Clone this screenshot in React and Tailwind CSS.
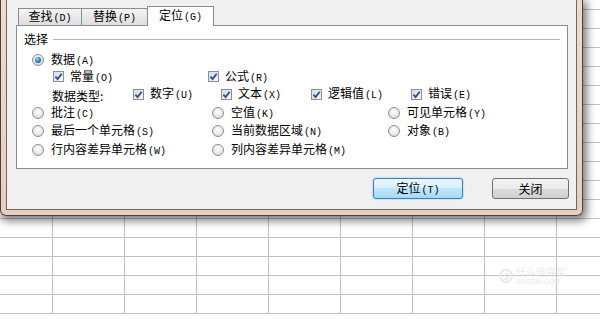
import React from 'react'

const ROWS = Array.from({ length: 17 })
const COLS = Array.from({ length: 8 })

function Key({ k }) {
  return <span className="ml-px font-['Liberation_Mono',monospace] text-[10px]">({k})</span>
}

function Label({ text, k }) {
  return (
    <span className="whitespace-nowrap text-[12px] leading-none text-black">
      {text}
      {k && <Key k={k} />}
    </span>
  )
}

function Radio({ checked }) {
  return (
    <span className="flex h-[12px] w-[12px] shrink-0 items-center justify-center rounded-full border border-[#8e9194] bg-[radial-gradient(circle_at_50%_40%,#ffffff_0%,#e8e8e8_55%,#c8c8c8_100%)]">
      {checked && (
        <span className="h-[6px] w-[6px] rounded-full bg-[radial-gradient(circle_at_40%_35%,#9ee6ff_0%,#2c88c4_45%,#123c63_100%)]" />
      )}
    </span>
  )
}

function Check() {
  return (
    <span className="flex h-[11px] w-[11px] shrink-0 items-center justify-center border border-[#8f8f8f] bg-[linear-gradient(135deg,#d3dbe5,#f6f8fa)]">
      <svg viewBox="0 0 9 9" className="h-[9px] w-[9px]">
        <path d="M1.4 4.6 L3.6 7 L7.7 1.7" fill="none" stroke="#2b4c8c" strokeWidth="1.8" />
      </svg>
    </span>
  )
}

function RadioItem({ text, k, checked, w }) {
  return (
    <div className={`flex items-center gap-[7px] ${w || ''}`}>
      <Radio checked={checked} />
      <Label text={text} k={k} />
    </div>
  )
}

function CheckItem({ text, k, w }) {
  return (
    <div className={`flex items-center gap-[6px] ${w || ''}`}>
      <Check />
      <Label text={text} k={k} />
    </div>
  )
}

export default function App() {
  return (
    <div className="relative h-[319px] w-[600px] overflow-hidden bg-white font-['Noto_Sans_CJK_SC','Noto_Sans',sans-serif]">
      {/* spreadsheet behind the dialog */}
      <div className="flex flex-col">
        {ROWS.map((_, r) => (
          <div key={r} className={`flex shrink-0 border-b border-[#c2c2c2] ${r === 0 ? 'h-[10px]' : 'h-[19px]'}`}>
            <div className="h-full w-[53px] shrink-0 border-r border-[#c2c2c2]" />
            {COLS.map((_, c) => (
              <div key={c} className="h-full w-[72px] shrink-0 border-r border-[#c2c2c2]" />
            ))}
          </div>
        ))}
      </div>

      {/* watermark */}
      <div className="absolute left-[499px] top-[266px] flex items-center gap-[3px] text-[#e9e9e9]">
        <span className="flex h-[14px] w-[14px] items-center justify-center rounded-full border-2 border-[#e9e9e9] text-[9px] font-bold leading-none">S</span>
        <div className="flex flex-col gap-px">
          <span className="block h-[11px] text-[10px] leading-[11px]">什么值得买</span>
          <span className="block h-[8px] font-['Liberation_Sans',sans-serif] text-[7px] leading-[8px]">SMZDM.COM</span>
        </div>
      </div>

      {/* dialog */}
      <div className="absolute left-0 top-0 h-[216px] w-[583px] rounded-b-[6px] border-x border-b border-[#4f4139] bg-[linear-gradient(to_bottom,#ecdccd,#e6cfbc)] px-[5px] pb-[5px] shadow-[2px_3px_8px_2px_rgba(0,0,0,0.5)]">
        <div className="flex h-full flex-col border-x border-b border-[#76655a] bg-[#f0f0f0]">
          {/* tabs */}
          <div className="flex items-end pl-[11px] pt-[6px]">
            <div className="flex h-[17px] w-[64px] items-center justify-center border-x border-t border-[#898c95] bg-[linear-gradient(to_bottom,#f4f4f4,#dedede)]">
              <Label text="查找" k="D" />
            </div>
            <div className="flex h-[17px] w-[66px] items-center justify-center border-r border-t border-[#898c95] bg-[linear-gradient(to_bottom,#f4f4f4,#dedede)]">
              <Label text="替换" k="P" />
            </div>
            <div className="relative z-10 -mb-px -ml-px flex h-[20px] w-[67px] items-center justify-center border-x border-t border-[#898c95] bg-white pb-[2px]">
              <Label text="定位" k="G" />
            </div>
          </div>

          {/* tab panel */}
          <div className="ml-[9px] mr-[8px] h-[144px] border border-[#898c95] bg-white">
            <div className="mt-[5px] flex h-[16px] items-center px-[7px]">
              <Label text="选择" />
              <div className="ml-[5px] h-px flex-1 bg-[#b4b4b4]" />
            </div>

            <div className="mt-[5px] flex h-[16px] items-center pl-[15px]">
              <RadioItem text="数据" k="A" checked />
            </div>

            <div className="flex h-[17px] items-center pl-[36px]">
              <CheckItem text="常量" k="O" w="w-[155px]" />
              <CheckItem text="公式" k="R" />
            </div>

            <div className="flex h-[18px] items-center pl-[35px]">
              <div className="w-[81px]">
                <Label text="数据类型:" />
              </div>
              <CheckItem text="数字" k="U" w="w-[88px]" />
              <CheckItem text="文本" k="X" w="w-[90px]" />
              <CheckItem text="逻辑值" k="L" w="w-[100px]" />
              <CheckItem text="错误" k="E" />
            </div>

            <div className="flex h-[19px] items-center pl-[15px]">
              <RadioItem text="批注" k="C" w="w-[180px]" />
              <RadioItem text="空值" k="K" w="w-[176px]" />
              <RadioItem text="可见单元格" k="Y" />
            </div>

            <div className="flex h-[18px] items-center pl-[15px]">
              <RadioItem text="最后一个单元格" k="S" w="w-[180px]" />
              <RadioItem text="当前数据区域" k="N" w="w-[176px]" />
              <RadioItem text="对象" k="B" />
            </div>

            <div className="flex h-[19px] items-center pl-[15px]">
              <RadioItem text="行内容差异单元格" k="W" w="w-[180px]" />
              <RadioItem text="列内容差异单元格" k="M" />
            </div>
          </div>

          {/* buttons */}
          <div className="mt-[9px] flex justify-end gap-[29px] pr-[7px]">
            <button className="flex h-[21px] w-[90px] items-center justify-center rounded-[3px] border border-[#3c7fb1] bg-[linear-gradient(to_bottom,#eaf6fd_0%,#d9f0fc_45%,#bee6fd_50%,#a7d9f5_100%)] shadow-[0_0_2px_#6ec5f0]">
              <Label text="定位" k="T" />
            </button>
            <button className="flex h-[21px] w-[77px] items-center justify-center rounded-[3px] border border-[#707070] bg-[linear-gradient(to_bottom,#f2f2f2_0%,#ebebeb_50%,#dddddd_51%,#cfcfcf_100%)]">
              <Label text="关闭" />
            </button>
          </div>
        </div>
      </div>
    </div>
  )
}
